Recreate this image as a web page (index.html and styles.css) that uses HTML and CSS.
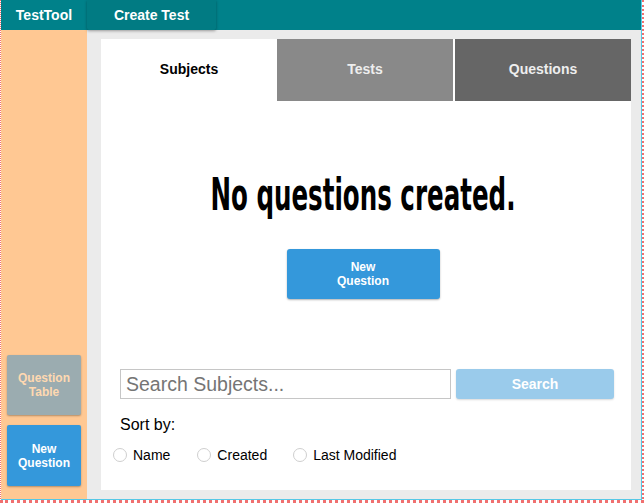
FILE: index.html
```html
<!DOCTYPE html>
<html>
<head>
<meta charset="utf-8">
<link rel="stylesheet" href="styles.css">
</head>
<body>
<div class="page">
  <div class="app">
    <header class="topbar">
      <div class="brand">TestTool</div>
      <div class="nav-btn">Create Test</div>
    </header>
    <div class="body">
      <aside class="sidebar">
        <div class="side-btn side-btn-muted">Question<br>Table</div>
        <div class="side-btn side-btn-blue">New<br>Question</div>
      </aside>
      <main class="main">
        <section class="card">
          <nav class="tabs">
            <div class="tab tab-active">Subjects</div>
            <div class="tab tab-tests">Tests</div>
            <div class="tab tab-questions">Questions</div>
          </nav>
          <div class="empty">
            <h1 class="empty-title">No questions created.</h1>
            <div class="primary-btn">New<br>Question</div>
          </div>
          <div class="filters">
            <div class="search-row">
              <div class="search-input">Search Subjects...</div>
              <div class="search-btn">Search</div>
            </div>
            <div class="sort-label">Sort by:</div>
            <div class="radios">
              <label class="radio"><span class="radio-dot"></span>Name</label>
              <label class="radio"><span class="radio-dot"></span>Created</label>
              <label class="radio"><span class="radio-dot"></span>Last Modified</label>
            </div>
          </div>
        </section>
      </main>
    </div>
  </div>
</div>
</body>
</html>
```

FILE: styles.css
```css
* { box-sizing: border-box; }
html, body { margin: 0; padding: 0; background: #fff; }
body { font-family: "Liberation Sans", Arial, sans-serif; }

.page {
  width: 644px;
  height: 503px;
  border-left: 1px dotted #f07070;
  border-right: 2px dotted #f07070;
  border-bottom: 3px dotted #f07070;
}
.app {
  height: 100%;
  display: flex;
  flex-direction: column;
  border-right: 1px solid #56c8e6;
  border-bottom: 1px solid #56c8e6;
}

.topbar {
  height: 30px;
  background: #00818a;
  display: flex;
  flex-shrink: 0;
  position: relative;
  z-index: 2;
}
.brand {
  width: 86px;
  color: #fff;
  font-weight: bold;
  font-size: 14px;
  display: flex;
  align-items: center;
  justify-content: center;
}
.nav-btn {
  width: 129px;
  background: #017b83;
  color: #fff;
  font-weight: bold;
  font-size: 14px;
  display: flex;
  align-items: center;
  justify-content: center;
  box-shadow: 0 1px 3px rgba(0,0,0,0.35);
  border-radius: 0 0 2px 2px;
}

.body {
  flex: 1;
  display: flex;
  min-height: 0;
}
.sidebar {
  width: 86px;
  background: #ffc893;
  display: flex;
  flex-direction: column;
  justify-content: flex-end;
  gap: 10px;
  padding: 0 6px 13px 6px;
}
.side-btn {
  height: 61px;
  border-radius: 2px;
  font-size: 12px;
  font-weight: bold;
  line-height: 14px;
  display: flex;
  align-items: center;
  justify-content: center;
  text-align: center;
  box-shadow: 0 1px 2px rgba(0,0,0,0.3);
}
.side-btn-muted { background: #9bacb0; color: #ffd9b1; height: 60px; }
.side-btn-blue { background: #3498db; color: #fff; }

.main {
  flex: 1;
  background: #ebebeb;
  padding: 9px 10px 9px 14px;
  display: flex;
}
.card {
  flex: 1;
  background: #fff;
  display: flex;
  flex-direction: column;
}
.tabs {
  display: flex;
  height: 62px;
}
.tab {
  flex: 1;
  display: flex;
  align-items: center;
  justify-content: center;
  font-weight: bold;
  font-size: 14px;
  color: #eee;
  padding-bottom: 2px;
}
.tab-active { background: #fff; color: #000; }
.tab-tests { background: #898989; margin-right: 2px; }
.tab-questions { background: #666666; }

.empty {
  display: flex;
  flex-direction: column;
  align-items: center;
  padding-right: 6px;
}
.empty-title {
  margin: 70px 0 0 0;
  font-family: "DejaVu Sans Condensed", sans-serif;
  font-weight: bold;
  font-size: 44px;
  line-height: 48px;
  color: #000;
  white-space: nowrap;
  transform: scaleX(0.62);
}
.primary-btn {
  margin-top: 30px;
  width: 153px;
  height: 50px;
  background: #3498db;
  color: #fff;
  font-weight: bold;
  font-size: 12px;
  line-height: 14px;
  text-align: center;
  display: flex;
  align-items: center;
  justify-content: center;
  border-radius: 3px;
  box-shadow: 0 1px 2px rgba(0,0,0,0.3);
}

.filters {
  margin-top: auto;
  padding: 0 17px 27px 19px;
}
.search-row {
  display: flex;
  gap: 5px;
  height: 30px;
}
.search-input {
  flex: 1;
  border: 1px solid #c6c6c6;
  font-size: 19.5px;
  color: #757575;
  padding: 0 5px;
  display: flex;
  align-items: center;
}
.search-btn {
  width: 158px;
  background: #9acbeb;
  color: #fff;
  font-weight: bold;
  font-size: 14px;
  border-radius: 3px;
  display: flex;
  align-items: center;
  justify-content: center;
  box-shadow: 0 1px 2px rgba(0,0,0,0.15);
}
.sort-label {
  margin-top: 16px;
  font-size: 16px;
  color: #000;
  line-height: 20px;
}
.radios {
  display: flex;
  margin-top: 12px;
  margin-left: -7px;
  font-size: 14px;
  color: #000;
}
.radio {
  display: flex;
  align-items: center;
  gap: 6px;
  margin-right: 27px;
}
.radio:nth-child(2) { margin-right: 26px; }
.radio-dot {
  width: 14px;
  height: 14px;
  border: 1px solid #cfcfcf;
  border-radius: 50%;
  background: #fff;
}
```
